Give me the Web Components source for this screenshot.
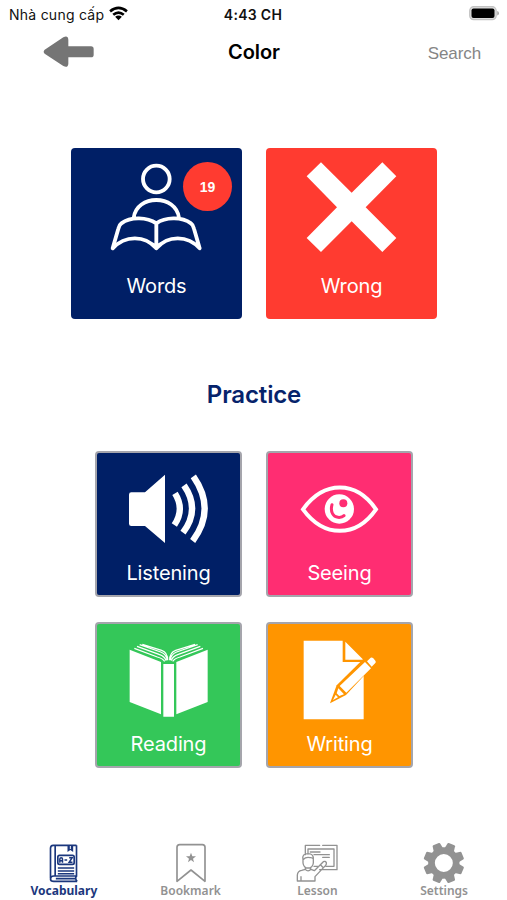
<!DOCTYPE html>
<html lang="vi"><head><meta charset="utf-8"><title>Color</title>
<style>html,body{margin:0;background:#fff}body{width:507px;height:900px;overflow:hidden;font-family:Inter,"Liberation Sans",sans-serif}</style>
</head><body>
<vocab-app></vocab-app>
<script>
const define = (name, html, init) => customElements.define(name, class extends HTMLElement {
  constructor(){ super(); this.attachShadow({mode:'open'}).innerHTML = html; }
  connectedCallback(){ if (init) init(this, this.shadowRoot); }
});

const icons = {
  words: ['-11 -8','0 0 171 120',`<g fill="none" stroke="#fff" stroke-width="11.500" stroke-linecap="round" stroke-linejoin="round"><circle cx="289" cy="117" r="40"/><path d="M221 234C229 162 349 162 357 234M289 250C262 232 213 229 184 250Q178 254 175 266L158 325C195 285 255 285 289 325C323 285 383 285 419 325L402 266Q399 254 393 250C364 229 315 232 289 250V325"/></g>`],
  wrong: ['-10 -8','0 0 171 120',`<path fill="#fff" d="M195 67L287 158L379 67L421 109L329 202L421 294L379 336L287 244L195 336L152 294L243 202L152 109Z"/>`],
  listening: ['-12 -13','0 0 143 102',`<path fill="#fff" d="M139 157H180L240 104V309L180 258H139Q132 258 132 251V164Q132 157 139 157Z"/><g fill="none" stroke="#fff" stroke-width="19"><path d="M270 160Q300 208 268 255M297 136Q347 208 294 278M325 109Q394 208 323 303"/></g>`],
  seeing: ['-12 -13','0 0 143 102',`<path fill="none" stroke="#fff" stroke-width="12" d="M141 208C204 121 300 121 360 208C300 294 204 294 141 208Z"/><circle fill="#fff" cx="250" cy="207" r="44"/><path fill="none" stroke="#ff2d72" stroke-linecap="round" stroke-width="9" d="M228 194C222 216 232 231 246 232Q258 233 264 227"/><circle cx="262" cy="190" r="12" fill="#ff2d72"/>`],
  reading: ['-12 -12','0 0 143 102',`<g fill="#fff"><path d="M134 113L228 150V307L134 270ZM368 113L274 150V307L368 270ZM235 156H267V314H235Z"/></g><g fill="none" stroke="#fff" stroke-width="3.800"><path d="M148 109L217 135Q234 140 239 148M156 103L222 127Q240 133 243 146M164 98L227 120Q245 127 246 145M172 97L230 115Q248 121 248 145M354 109L285 135Q268 140 263 148M346 103L280 127Q262 133 259 146M338 98L275 120Q257 127 256 145M330 97L272 115Q254 121 254 145"/></g>`],
  writing: ['-12 -12','0 0 143 102',`<path fill="#fff" d="M143 86H260V150H318L323 155V322H143ZM268 89L322 143H268Z"/><path fill="#ff9500" d="M222 274L242 220L331 132L356 157L270 249Z"/><path fill="#fff" d="M251 222L327 150L345 169L271 242ZM333 148L344 137Q348 135 352 139L358 146Q361 150 358 153L347 164ZM247 229L264 247L250 252L242 244ZM239 248L246 256L231 264Z"/>`]
};
const tabIcons = {
  vocabulary: [10,`<g fill="none" stroke="currentColor" stroke-width="5"><path d="M201 31H131Q123 31 123 40V129M201 31V123H133Q123 123 123 132Q123 139 133 139H203M137 33V122M201 123Q195 131 203 139M139 131H198"/><rect x="145" y="61" width="49" height="27" rx="5"/><path stroke-width="4.5" d="M151 83V72Q151 68 155 68Q159 68 159 72V83M151 77H159M165 75H173M179 68H188L179 82H189M145 99H194M145 108H194M145 116H194"/></g><path fill="currentColor" d="M174 32H191V51L182.500 45L174 51Z"/><path stroke="#fff" stroke-width="3" d="M182.500 33V42"/>`],
  bookmark: [140,`<path fill="none" stroke="currentColor" stroke-width="5" stroke-linejoin="round" d="M111 139V37Q111 29 119 29H187Q195 29 195 37V139L153 105Z"/><path fill="currentColor" d="M153 53L157 64H168L159 71L162 82L153 75L144 82L147 71L138 64H149Z"/>`],
  lesson: [275,`<g fill="none" stroke="currentColor" stroke-width="4" stroke-linejoin="round" stroke-linecap="round"><path d="M91 59V31H134M143 31H186V104H134M99 57V42H177V94H153M117 94H128M106 51H135M117 59H163M143 67H163M67 138V120Q68 108 80 106L91 103Q99 112 108 103L118 107L145 80Q151 77 154 83Q155 88 152 91L120 125V138ZM84 74Q80 56 99 56Q117 56 115 74V84Q113 99 99 99Q86 99 84 84ZM84 74Q93 65 105 68Q112 67 115 72M91 98V104M107 98V104M78 125V137M137 90L145 98"/></g>`],
  settings: [275,`<circle cx="505" cy="84" r="37" fill="none" stroke="currentColor" stroke-width="20"/><g fill="currentColor">${[22.5,67.5,112.5,157.5,202.5,247.5,292.5,337.5].map(a=>`<path transform="rotate(${a} 505 84)" d="M490 42L493 25Q494 23 496 23H514Q516 23 517 25L520 42Z"/>`).join('')}</g>`]
};

define('status-bar', `<style>:host{display:grid;grid-template-columns:1fr auto 1fr;align-items:center;height:28px;box-sizing:border-box;padding:0 8px 0 9px;font-size:14px;color:#111}.l{display:flex;align-items:center;gap:5px;letter-spacing:.25px}.l svg{margin-top:-2px}.t{font-weight:600;letter-spacing:.3px;font-size:14px;margin-right:2px}.r{justify-self:end;display:flex;margin-top:-2px}</style>
<span class="l"><span>Nhà cung cấp</span><svg width="19" height="15" viewBox="0 0 18 14"><g fill="none" stroke="#000" stroke-width="2.500"><path d="M1 5Q9 -1.500 17 5M4 8.300Q9 4 14 8.300"/></g><path d="M5.800 10Q9 7.600 12.200 10L9 13.500Z"/></svg></span>
<span class="t">4:43 CH</span>
<span class="r"><svg width="30" height="15" viewBox="0 0 30 15"><rect x=".7" y=".7" width="26.500" height="13" rx="4" fill="#ddd" stroke="#c2c2c2" stroke-width="1.200"/><rect x="2.500" y="2.500" width="23" height="9.500" rx="2"/><path d="M28.200 5Q30 5.500 30 7.200T28.200 9.500Z" fill="#aaa"/></svg></span>`);

define('nav-header', `<style>:host{display:grid;grid-template-columns:1fr auto 1fr;align-items:center;height:48px;box-sizing:border-box;padding:0 26px 0 43px}h1{margin:0 16px 0 0;font-size:20px;font-weight:600;letter-spacing:-.1px;color:#000}.s{justify-self:end;margin-top:4px;font:17px "Liberation Sans",Arial,sans-serif;letter-spacing:-.1px;color:#858585}svg{display:block}</style>
<svg width="52" height="32" viewBox="129 108 156 96"><path fill="#757575" d="M134 149L190 112Q204 105 205 119V139H273Q281 139 281 147V164Q281 172 273 172H205V191Q204 205 190 198L134 161Q128 155 134 149Z"/></svg><h1><slot></slot></h1><span class="s">Search</span>`);

define('count-badge', `<style>:host{display:flex;align-items:center;justify-content:center;width:49px;height:49px;border-radius:50%;background:#ff3b30;color:#fff;font:bold 14px "Liberation Sans",Arial,sans-serif}</style><slot></slot>`);

define('menu-tile', `<style>:host{position:relative;display:flex;flex-direction:column;align-items:center;box-sizing:border-box;width:171px;height:171px;border-radius:4px;background:var(--tile);color:#fff;font-size:20px}
:host([small]){width:147px;height:146px;border:2px solid #a5a5ac}svg{display:block;flex:none}.label{line-height:36px;letter-spacing:-.15px}::slotted([slot=badge]){position:absolute;top:14px;right:10px}</style>
<span class="icon"></span><span class="label"><slot></slot></span><slot name="badge"></slot>`, (el, root) => {
  const [t, vb, body] = icons[el.getAttribute('icon')];
  const [, , w, h] = vb.split(' ');
  root.querySelector('.icon').innerHTML = `<svg width="${w}" height="${h}" viewBox="${vb}"><g transform="translate(${t}) scale(.33333)">${body}</g></svg>`;
});

define('tab-item', `<style>:host{display:flex;flex-direction:column;align-items:center;color:#929292;font:600 12px/16px "Noto Sans","Open Sans",sans-serif;letter-spacing:0}:host([active]){color:#1b377d;font-weight:700}.label{margin-left:1px}svg{display:block}</style><span class="icon"></span><span class="label"><slot></slot></span>`, (el, root) => {
  const [ox, body] = tabIcons[el.getAttribute('icon')];
  const cx = +el.getAttribute('center');
  root.querySelector('.icon').innerHTML = `<svg width="60" height="43" viewBox="0 0 60 43"><g transform="translate(${ox - cx + 30} -5) scale(.33333)">${body}</g></svg>`;
});

define('tab-bar', `<style>:host{display:grid;grid-template-columns:repeat(4,1fr);height:60px}</style><slot></slot>`);

define('vocab-app', `<style>:host{display:flex;flex-direction:column;width:507px;height:900px;background:#fff}
.row{display:flex;justify-content:center;gap:24px;margin:72px 0 0 1px}h2{margin:60px 0 0 1px;height:32px;line-height:32px;text-align:center;font-size:24px;font-weight:600;letter-spacing:-.15px;color:#06236b}
.grid{display:grid;grid-template-columns:147px 147px;gap:25px 24px;justify-content:center;margin:40px 0 0 1px}tab-bar{margin-top:auto}</style>
<status-bar></status-bar><nav-header>Color</nav-header>
<div class="row"><menu-tile icon="words" style="--tile:#001f66">Words<count-badge slot="badge">19</count-badge></menu-tile><menu-tile icon="wrong" style="--tile:#ff3b30">Wrong</menu-tile></div>
<h2>Practice</h2>
<div class="grid"><menu-tile small icon="listening" style="--tile:#001f66">Listening</menu-tile><menu-tile small icon="seeing" style="--tile:#ff2d72">Seeing</menu-tile><menu-tile small icon="reading" style="--tile:#34c759">Reading</menu-tile><menu-tile small icon="writing" style="--tile:#ff9500">Writing</menu-tile></div>
<tab-bar><tab-item active icon="vocabulary" center="63.500">Vocabulary</tab-item><tab-item icon="bookmark" center="190">Bookmark</tab-item><tab-item icon="lesson" center="317">Lesson</tab-item><tab-item icon="settings" center="443.500">Settings</tab-item></tab-bar>`);
</script></body></html>
